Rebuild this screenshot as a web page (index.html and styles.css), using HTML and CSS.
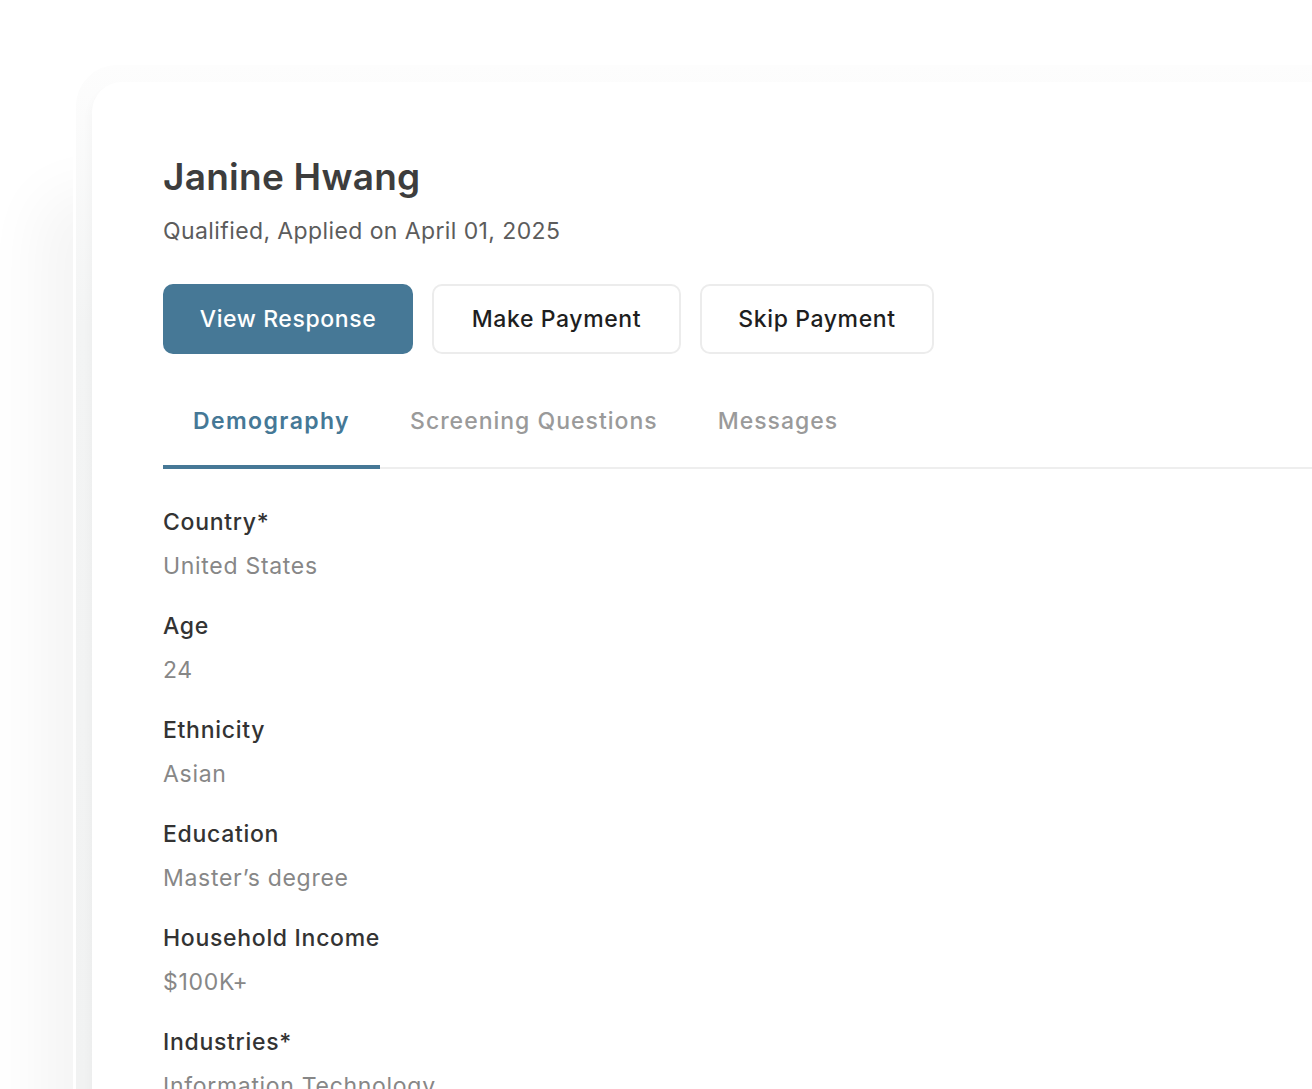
FILE: index.html
```html
<!DOCTYPE html>
<html lang="en">
<head>
    <meta charset="UTF-8">
    <meta name="viewport" content="width=device-width, initial-scale=1.0">
    <title>Janine Hwang - Applicant</title>
    <link rel="stylesheet" href="styles.css">
</head>
<body>

    <!-- Outer frame around the applicant card -->
    <div class="frame">
        <div class="card">

            <!-- Applicant header -->
            <div class="applicant-header">
                <h1 class="applicant-name">Janine Hwang</h1>
                <p class="applicant-status">Qualified, Applied on April 01, 2025</p>
            </div>

            <!-- Actions -->
            <div class="actions">
                <button class="btn btn-primary">View Response</button>
                <button class="btn btn-outline">Make Payment</button>
                <button class="btn btn-outline">Skip Payment</button>
            </div>

            <!-- Tabs -->
            <div class="tabs">
                <button class="tab active">Demography</button>
                <button class="tab">Screening Questions</button>
                <button class="tab">Messages</button>
            </div>

            <!-- Demography fields -->
            <div class="fields">
                <div class="field">
                    <div class="field-label">Country*</div>
                    <div class="field-value">United States</div>
                </div>
                <div class="field">
                    <div class="field-label">Age</div>
                    <div class="field-value">24</div>
                </div>
                <div class="field">
                    <div class="field-label">Ethnicity</div>
                    <div class="field-value">Asian</div>
                </div>
                <div class="field">
                    <div class="field-label">Education</div>
                    <div class="field-value">Master’s degree</div>
                </div>
                <div class="field">
                    <div class="field-label">Household Income</div>
                    <div class="field-value">$100K+</div>
                </div>
                <div class="field">
                    <div class="field-label">Industries*</div>
                    <div class="field-value">Information Technology</div>
                </div>
            </div>

        </div>
    </div>

</body>
</html>
```

FILE: styles.css
```css
/* General Styles */
html, body {
    height: 100%;
}

body {
    margin: 0;
    font-family: 'Inter', 'Open Sans', sans-serif;
    background-color: #ffffff;
    overflow: hidden;
}

/* Frame (soft grey border around the card, fading out at the top) */
.frame {
    margin: 62px 0 0 73px;
    padding: 17px 0 0 16px;
    height: calc(100% - 62px);
    box-sizing: border-box;
    background: linear-gradient(to bottom, #fdfdfd 0, #f3f4f4 260px, #f1f2f2 100%);
    border-top: 3px solid #ffffff;
    border-left: 3px solid #ffffff;
    border-top-left-radius: 44px;
    box-shadow: -45px 120px 60px -10px rgba(0, 0, 0, 0.045);
}

/* Card */
.card {
    background-color: #ffffff;
    height: 100%;
    border-top-left-radius: 30px;
    padding: 73px 0 0 71px;
    box-sizing: border-box;
    box-shadow: -3px 6px 8px rgba(0, 0, 0, 0.025);
}

/* Applicant header */
.applicant-name {
    margin: 0;
    font-size: 37px;
    font-weight: 600;
    line-height: 44px;
    color: #3d3d3d;
    letter-spacing: 0.25px;
}

.applicant-status {
    margin: 17px 0 0;
    font-size: 23px;
    font-weight: 400;
    line-height: 30px;
    color: #5c5c5c;
    letter-spacing: 0.4px;
}

/* Actions */
.actions {
    display: flex;
    gap: 19px;
    margin-top: 38px;
}

.btn {
    height: 70px;
    border-radius: 10px;
    font-family: inherit;
    font-size: 23px;
    font-weight: 500;
    letter-spacing: 0.6px;
    cursor: pointer;
}

.btn-primary {
    width: 250px;
    background-color: #467896;
    border: none;
    color: #ffffff;
}

.btn-outline {
    background-color: #ffffff;
    border: 2px solid #ececec;
    color: #1e1e1e;
}

.btn-outline:nth-child(2) {
    width: 249px;
}

.btn-outline:nth-child(3) {
    width: 234px;
}

/* Tabs */
.tabs {
    display: flex;
    margin-top: 32px;
    border-bottom: 2px solid #eeeeee;
}

.tab {
    padding: 20px 30px 29px;
    margin-bottom: -2px;
    background: none;
    border: none;
    border-bottom: 4px solid transparent;
    font-family: inherit;
    font-size: 23px;
    font-weight: 500;
    line-height: 30px;
    letter-spacing: 1px;
    color: #9a9a9a;
    cursor: pointer;
}

.tab.active {
    color: #457896;
    font-weight: 600;
    letter-spacing: 1.4px;
    border-bottom-color: #467896;
}

/* Fields */
.fields {
    padding-top: 38px;
}

.field {
    margin-bottom: 30px;
}

.field-label {
    font-size: 23px;
    font-weight: 500;
    line-height: 30px;
    letter-spacing: 0.7px;
    color: #333333;
}

.field-value {
    margin-top: 14px;
    font-size: 23px;
    line-height: 30px;
    letter-spacing: 0.7px;
    color: #878787;
}
```
